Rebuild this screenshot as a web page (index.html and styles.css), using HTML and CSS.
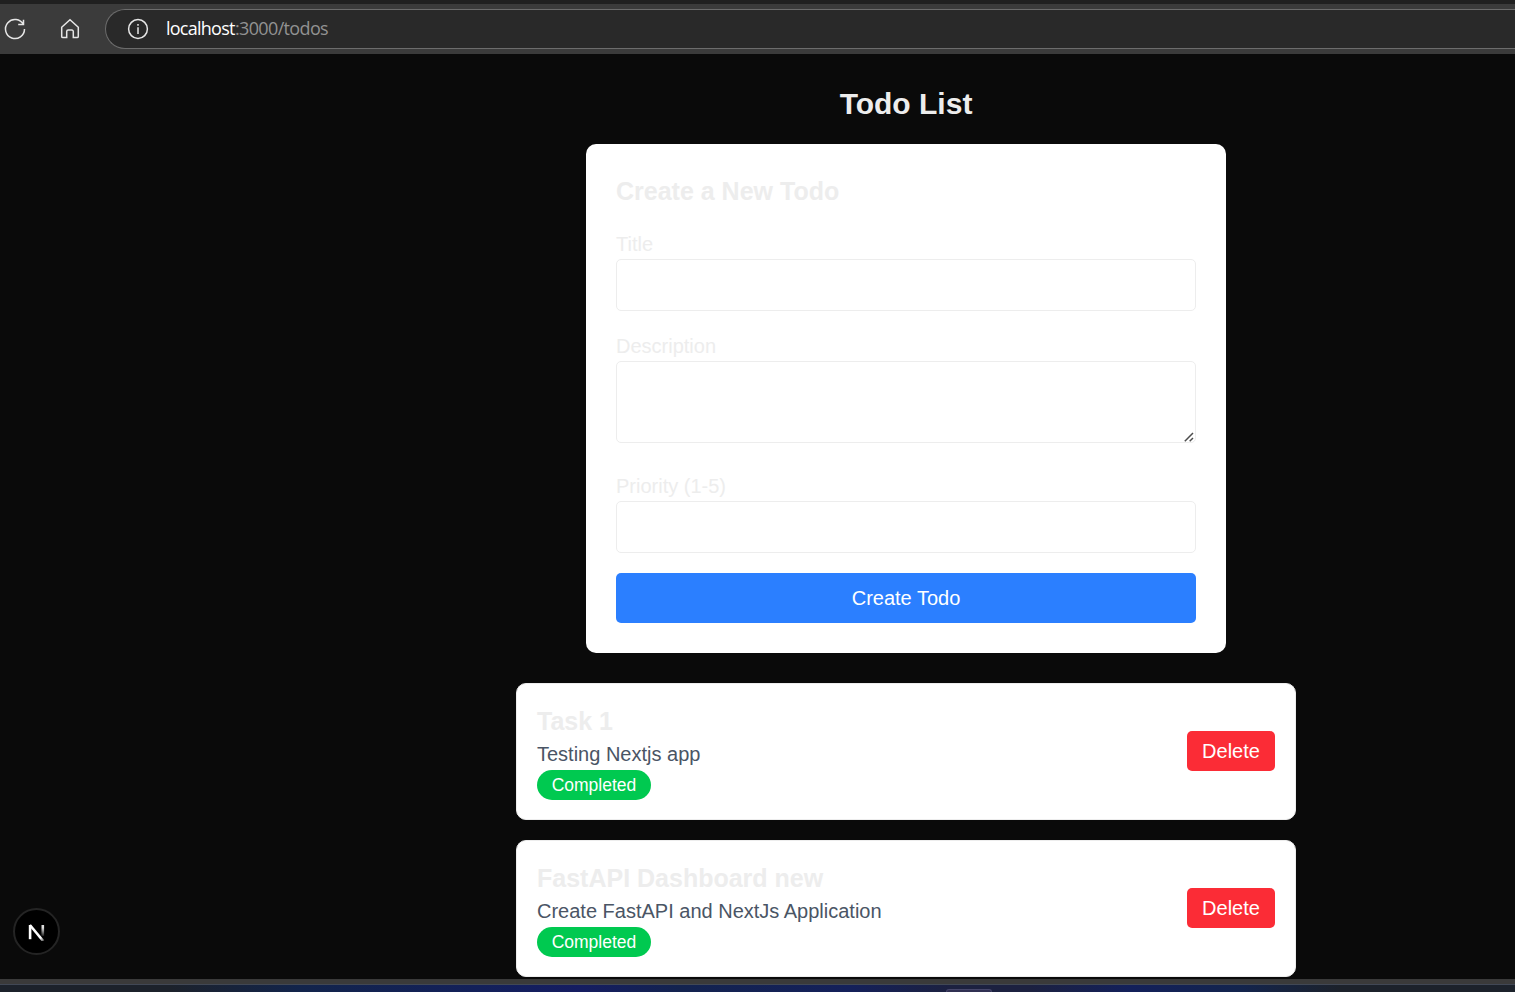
FILE: index.html
```html
<!DOCTYPE html>
<html lang="en">
<head>
<meta charset="utf-8">
<title>Todo List</title>
<link rel="stylesheet" href="styles.css">
</head>
<body>
<header class="toolbar">
  <svg class="icon reload" viewBox="0 0 24 24"><path d="M20.4 7.6A9.5 9.5 0 1 0 21.5 12M20.5 2.7V7.6H15.2"/></svg>
  <svg class="icon home" viewBox="0 0 24 24"><path d="M3.7 10.3L12 2.7L20.3 10.3V19.4A1.2 1.2 0 0 1 19.1 20.6H15.3V14.6A1.5 1.5 0 0 0 13.8 13.1H10.2A1.5 1.5 0 0 0 8.7 14.6V20.6H4.9A1.2 1.2 0 0 1 3.7 19.4Z"/></svg>
  <div class="address">
    <svg class="icon info" viewBox="0 0 24 24"><circle cx="12" cy="12" r="9.4"/><path d="M12 10.3V17M12 7V8.8"/></svg>
    <span class="url"><span class="host">localhost</span><span class="path">:3000/todos</span></span>
  </div>
</header>
<main class="page">
  <h1 class="page-title">Todo List</h1>
  <form class="form-card">
    <h2 class="form-title">Create a New Todo</h2>
    <label class="field">Title<input class="control" type="text"></label>
    <label class="field field-area">Description
      <span class="area-wrap"><textarea class="control area"></textarea>
        <svg class="grip" viewBox="0 0 10 10"><path d="M0.8 9.2L9 1M5.7 9.2L9 6"/></svg>
      </span>
    </label>
    <label class="field">Priority (1-5)<input class="control" type="text"></label>
    <button class="submit" type="button">Create Todo</button>
  </form>
  <section class="list">
    <article class="todo">
      <div class="todo-body">
        <h3 class="todo-title">Task 1</h3>
        <p class="todo-text">Testing Nextjs app</p>
        <span class="badge">Completed</span>
      </div>
      <button class="delete" type="button">Delete</button>
    </article>
    <article class="todo">
      <div class="todo-body">
        <h3 class="todo-title">FastAPI Dashboard new</h3>
        <p class="todo-text">Create FastAPI and NextJs Application</p>
        <span class="badge">Completed</span>
      </div>
      <button class="delete" type="button">Delete</button>
    </article>
  </section>
  <div class="dev-badge">
    <svg class="dev-mark" viewBox="0 0 18 18">
      <defs>
        <linearGradient id="diag" gradientUnits="userSpaceOnUse" x1="9" y1="9" x2="16" y2="18"><stop offset="0.6" stop-color="#fff"/><stop offset="1" stop-color="#fff" stop-opacity="0.3"/></linearGradient>
        <linearGradient id="stem" gradientUnits="userSpaceOnUse" x1="0" y1="1" x2="0" y2="13"><stop offset="0.3" stop-color="#ddd"/><stop offset="1" stop-color="#fff" stop-opacity="0.1"/></linearGradient>
      </defs>
      <path class="left" d="M2.1 16.2V2"/>
      <path d="M1.9 2L15.2 18" stroke="url(#diag)"/>
      <path d="M14.8 2V13" stroke="url(#stem)"/>
    </svg>
  </div>
</main>
<footer class="edge"><span class="taskbar"><span class="tab"></span></span></footer>
</body>
</html>
```
FILE: styles.css
```css
* { box-sizing: border-box; margin: 0; }
body {
  height: 992px;
  display: flex;
  flex-direction: column;
  overflow: hidden;
  background: #0a0a0a;
  color: #ededed;
  font: 20px/30px "Liberation Sans", Arial, sans-serif;
}
.toolbar {
  flex: none;
  display: flex;
  align-items: center;
  height: 54px;
  padding: 0 0 0 3px;
  border-top: 4px solid #202020;
  background: #3b3b3b;
}
.icon { flex: none; width: 24px; height: 24px; fill: none; stroke: #e6e6e6; stroke-width: 1.5; }
.home { margin-left: 31px; }
.address {
  flex: 1;
  display: flex;
  align-items: center;
  height: 40px;
  margin-left: 23px;
  padding-left: 20px;
  border: 1px solid #6c6c6c;
  border-right: 0;
  border-radius: 20px 0 0 20px;
  background: #292929;
}
.url { display: flex; margin: 0 0 2px 16px; font: 18px/30px "Open Sans", "Noto Sans", sans-serif; }
.host { width: 69px; letter-spacing: -0.75px; color: #fff; }
.path { letter-spacing: -0.65px; color: #929292; }
.page {
  flex: none;
  height: 925px;
  display: flex;
  flex-direction: column;
  align-items: center;
  padding: 30px 0 0 297px;
  overflow: hidden;
}
.page-title { margin-bottom: 20px; font-size: 30px; line-height: 40px; }
.form-card { width: 640px; padding: 30px; border-radius: 10px; background: #fff; }
.form-title { margin-bottom: 20px; font-size: 25px; line-height: 35px; }
.field { display: block; margin-bottom: 20px; }
.field-area { margin-bottom: 28px; }
.control {
  display: block;
  width: 100%;
  height: 52px;
  padding: 10px;
  border: 1px solid #ededed;
  border-radius: 5px;
  background: transparent;
  outline: 0;
}
.area-wrap { display: block; position: relative; }
.area { height: 82px; resize: none; }
.grip { position: absolute; right: 2px; bottom: 1px; width: 10px; height: 10px; fill: none; stroke: #4c4c4c; stroke-width: 1.5; }
.form-title, .todo-title { color: #ededed; }
.submit, .delete { display: block; border: 0; border-radius: 5px; color: #fff; font: inherit; }
.submit { width: 100%; height: 50px; padding: 0; background: #2b7fff; }
.list { display: flex; flex-direction: column; gap: 20px; width: 780px; margin-top: 30px; }
.todo {
  display: flex;
  align-items: center;
  justify-content: space-between;
  height: 137px;
  padding: 20px;
  border: 1px solid #ededed;
  border-radius: 10px;
  background: #fff;
}
.todo-title { font-size: 25px; line-height: 35px; }
.todo-text { color: #4a5565; }
.badge {
  display: block;
  width: 114px;
  height: 30px;
  margin-top: 1px;
  border-radius: 15px;
  background: #00c950;
  color: #fff;
  font-size: 17.5px;
  text-align: center;
}
.delete { width: 88px; height: 40px; margin-bottom: 1px; padding: 0; background: #fb2c36; }
.dev-badge {
  position: absolute;
  left: 13px;
  top: 908px;
  display: grid;
  place-items: center;
  width: 47px;
  height: 47px;
  border: 2px solid #242424;
  border-radius: 50%;
  background: #000;
}
.dev-mark { width: 18px; height: 18px; fill: none; stroke-width: 2.6; }
.left { stroke: #fff; }
.edge { flex: none; height: 13px; border-top: 5px solid #3a3a3a; background: #1c222b; }
.taskbar {
  display: flex;
  height: 8px;
  padding: 4px 0 0 946px;
  border-top: 1px solid #414855;
  background: linear-gradient(90deg, #1c222b 0, #1c222b 170px, #12244b 300px, #13205a 480px, #151d61 580px, #13234f 680px, #14205a 850px, #1c2140 950px, #1c2140 1030px, #13205a 1130px, #13244d 1240px, #1c222b 1340px, #1c222b);
}
.tab { width: 46px; height: 3px; border: 1px solid #46466a; border-bottom: 0; border-radius: 4px 4px 0 0; background: #303052; }
```
